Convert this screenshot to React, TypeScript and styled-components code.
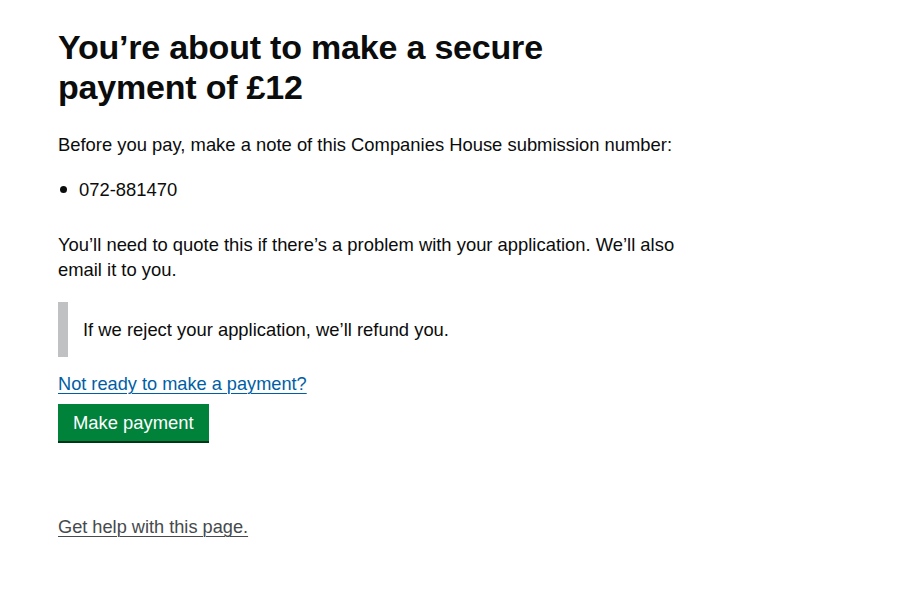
import React from "react";
import styled, { createGlobalStyle } from "styled-components";

const Global = createGlobalStyle`
  html, body { margin: 0; padding: 0; background: #ffffff; }
  body { font-family: "Liberation Sans", Arial, sans-serif; color: #0b0c0c; -webkit-font-smoothing: antialiased; }
`;

const Page = styled.main`
  padding: 27px 0 40px 58px;
`;

const Column = styled.div`
  max-width: 636px;
`;

const Heading = styled.h1`
  font-size: 34px;
  line-height: 40px;
  font-weight: 700;
  margin: 0 0 25px;
  letter-spacing: -0.2px;
`;

const Body = styled.p<{ $gap?: number }>`
  font-size: 18.4px;
  line-height: 25px;
  margin: 0 0 ${(p) => p.$gap ?? 20}px;
`;

const List = styled.ul`
  list-style: none;
  margin: 0 0 30px;
  padding: 0;
  font-size: 18.4px;
  line-height: 25px;
`;

const ListItem = styled.li`
  display: flex;
  align-items: center;
  gap: 12px;
  &::before {
    content: "";
    width: 7px;
    height: 7px;
    border-radius: 50%;
    background: #0b0c0c;
    margin-left: 2px;
  }
`;

const Inset = styled.div`
  border-left: 10px solid #bfc1c3;
  padding: 15px 0 15px 15px;
  margin: 0 0 15px;
  font-size: 18.4px;
  line-height: 25px;
`;

const Link = styled.a<{ $muted?: boolean }>`
  font-size: 18.2px;
  line-height: 25px;
  color: ${(p) => (p.$muted ? "#454a4c" : "#005ea5")};
  text-decoration: underline;
  text-underline-offset: 3px;
  text-decoration-thickness: 1px;
`;

const LinkLine = styled.div<{ $gap: number }>`
  margin-bottom: ${(p) => p.$gap}px;
`;

const Button = styled.button`
  font-family: inherit;
  font-size: 18.4px;
  line-height: 25px;
  color: #ffffff;
  background: #00823b;
  border: 0;
  border-radius: 0;
  box-shadow: 0 2px 0 #003618;
  padding: 6px 15px;
  height: 37px;
  min-width: 150px;
  white-space: nowrap;
  cursor: pointer;
  margin: 0 0 74px;
`;

export default function App() {
  return (
    <>
      <Global />
      <Page>
        <Column>
          <Heading>
            You’re about to make a secure
            <br />
            payment of £12
          </Heading>
          <Body>Before you pay, make a note of this Companies House submission number:</Body>
          <List>
            <ListItem>072-881470</ListItem>
          </List>
          <Body>
            You’ll need to quote this if there’s a problem with your application. We’ll also email it to you.
          </Body>
          <Inset>If we reject your application, we’ll refund you.</Inset>
          <LinkLine $gap={7}>
            <Link href="#">Not ready to make a payment?</Link>
          </LinkLine>
          <Button>Make payment</Button>
          <LinkLine $gap={0}>
            <Link href="#" $muted>
              Get help with this page.
            </Link>
          </LinkLine>
        </Column>
      </Page>
    </>
  );
}
